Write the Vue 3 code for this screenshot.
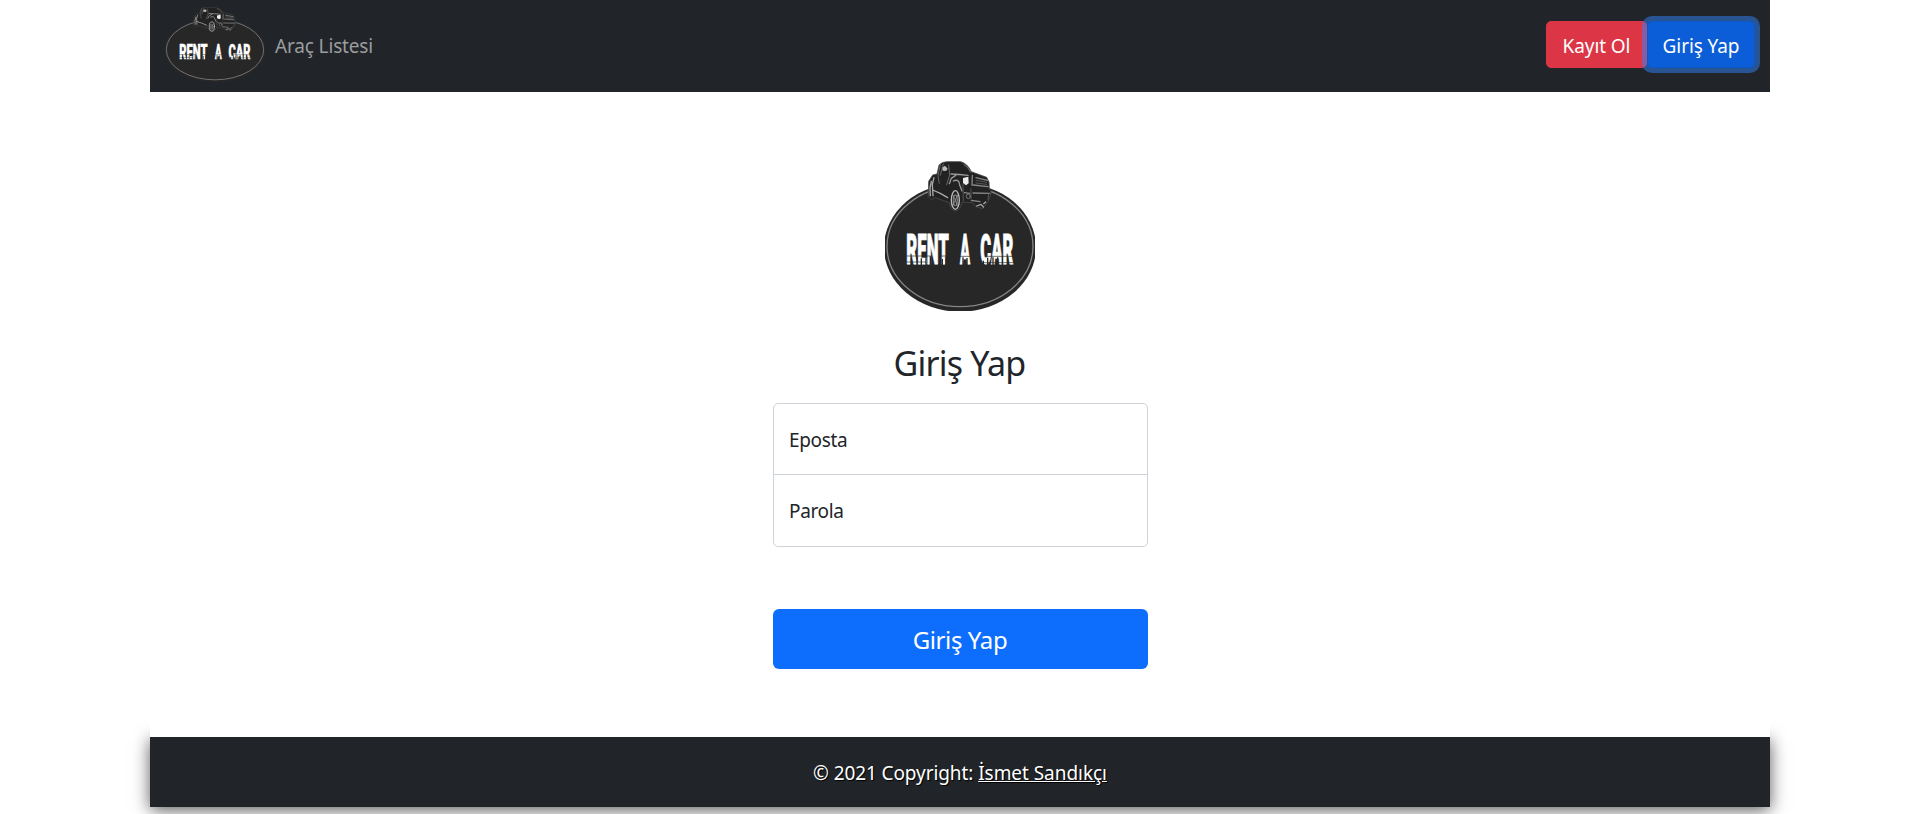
<script setup>
import { ref } from 'vue'

const fields = [
  { id: 'email', label: 'Eposta', type: 'email' },
  { id: 'password', label: 'Parola', type: 'password' },
]
const values = ref({ email: '', password: '' })

const logoWords = [
  { text: 'RENT', place: 'translate(109 342) scale(0.4 1)' },
  { text: 'A', place: 'translate(270 342) scale(0.35 1)' },
  { text: 'CAR', place: 'translate(331 342) scale(0.395 1)' },
]
</script>

<template>
  <div class="page">
    <svg class="defs" aria-hidden="true">
      <symbol id="logo-art" viewBox="45 33 450 450">
        <ellipse cx="270" cy="292" rx="228" ry="193" fill="#272727" />
        <ellipse cx="270" cy="289" rx="219" ry="181" fill="none" stroke="#858585" stroke-width="4" />
        <path d="M175 140 L176 94 L188 75 L201 72 L207 45 Q216 35 232 35 L272 35 Q292 40 304 65 L350 82 L357 96 L358 118 L363 122 L361 137 L354 154 L338 176 L318 170 L308 158 L276 156 Q272 180 256 183 Q242 180 238 158 L195 143 L184 149 Z" fill="#222" stroke="#4a4a4a" stroke-width="2.5" />
        <g fill="none" stroke-linecap="round" stroke-linejoin="round">
          <path d="M184 94 L180 114 L181 137 M192 83 L187 103 L189 137 M188 120 L211 130 L233 143" stroke="#aaa" stroke-width="4" />
          <path d="M211 43 L204 78 L208 100 M220 42 L211 76 M236 45 L239 75 L230 104" stroke="#666" stroke-width="3" />
          <path d="M243 72 Q268 73 294 76 M238 101 L244 85 L257 76 M250 93 Q267 85 269 105 L276 123" stroke="#999" stroke-width="4" />
          <path d="M281 43 L293 53 L302 67" stroke="#999" stroke-width="2" />
          <path d="M307 76 L306 106 M318 83 L352 91 M310 105 L354 110 M283 128 L299 130 M309 129 L359 130 M304 151 L330 155" stroke="#888" stroke-width="4" />
          <path d="M318 91 L350 97 M318 99 L350 103 M279 102 L280 152 M303 117 L303 147 M356 132 L354 149" stroke="#555" stroke-width="3" />
          <ellipse cx="256" cy="150" rx="12" ry="28" stroke="#bbb" stroke-width="4" />
          <ellipse cx="256" cy="151" rx="6" ry="16" stroke="#777" stroke-width="4" />
          <path d="M250 137 L262 166 M263 135 L249 166" stroke="#aaa" stroke-width="2" />
          <ellipse cx="295" cy="139" rx="6" ry="7" stroke="#777" stroke-width="3" />
          <path d="M320 168 L333 163 L340 171 M341 161 L347 156" stroke="#aaa" stroke-width="4" />
        </g>
        <path d="M217 53 L225 47 L233 56 L228 63 L218 62 Z" fill="#bbb" />
        <path d="M279 84 L295 80 L296 100 L288 106 L279 99 Z" fill="#eee" />
      </symbol>
      <symbol id="logo-drips" viewBox="45 33 450 450">
        <g fill="none" stroke="#272727">
          <path d="M108 318 h74 M211 318 h26 M268 319 h34 M350 319 h82" stroke-width="2" />
          <path d="M124 324 v24 M141 320 v28 M154 325 v23 M168 322 v26 M181 319 v29 M217 327 v21 M228 321 v27 M279 322 v26 M291 324 v24 M340 332 v16 M353 323 v25 M369 322 v26 M383 322 v26 M397 319 v29 M413 321 v27" stroke-width="4" />
          <path d="M108 336 h60 M338 338 h94" stroke-width="2" />
        </g>
      </symbol>
    </svg>

    <header class="navbar">
      <nav class="nav-left">
        <svg class="nav-logo" viewBox="45 33 450 450" preserveAspectRatio="none">
          <use href="#logo-art" x="45" y="33" width="450" height="450" />
          <text v-for="w in logoWords" :key="w.text" class="logo-word" :transform="w.place">{{ w.text }}</text>
          <use href="#logo-drips" x="45" y="33" width="450" height="450" />
        </svg>
        <a class="nav-link">Araç Listesi</a>
      </nav>
      <div class="nav-actions">
        <button class="btn danger">Kayıt Ol</button>
        <button class="btn primary focused">Giriş Yap</button>
      </div>
    </header>

    <main class="content">
      <form class="login" @submit.prevent>
        <svg class="main-logo" viewBox="45 33 450 450" preserveAspectRatio="none">
          <use href="#logo-art" x="45" y="33" width="450" height="450" />
          <text v-for="w in logoWords" :key="w.text" class="logo-word" :transform="w.place">{{ w.text }}</text>
          <use href="#logo-drips" x="45" y="33" width="450" height="450" />
        </svg>
        <h1>Giriş Yap</h1>
        <div class="fields">
          <label v-for="f in fields" :key="f.id" class="field">
            <span>{{ f.label }}</span>
            <input v-model="values[f.id]" :type="f.type" />
          </label>
        </div>
        <button class="submit" type="submit">Giriş Yap</button>
      </form>
    </main>

    <footer class="footer">
      <span class="copy">© 2021 Copyright:</span>
      <a>İsmet Sandıkçı</a>
    </footer>
  </div>
</template>

<style>
body {
  background: #fff;
  overflow: hidden;
}
</style>

<style scoped>
* {
  box-sizing: border-box;
}
.page {
  width: 1620px;
  height: 814px;
  margin-left: 150px;
  font-family: "Segoe UI", "Noto Sans", "Open Sans", sans-serif;
  font-size: 19px;
  color: #212529;
  white-space: nowrap;
}
.defs {
  display: block;
  width: 0;
  height: 0;
}
.logo-word {
  font-family: Roboto, sans-serif;
  font-weight: 900;
  font-size: 126px;
  letter-spacing: 0;
  fill: #fff;
  stroke: #fff;
  stroke-width: 3px;
}
.navbar {
  height: 92px;
  display: flex;
  justify-content: space-between;
  padding: 0 15px;
  background: #212529;
}
.nav-left {
  display: flex;
  align-items: flex-start;
  gap: 10px;
}
.nav-logo {
  width: 100px;
  height: 75px;
  margin-top: 7px;
}
.nav-link {
  line-height: 30px;
  margin-top: 31px;
  color: #9b9d9e;
  letter-spacing: -0.15px;
}
.nav-actions {
  display: flex;
  align-items: center;
}
.btn {
  height: 47px;
  margin: 0 0 4px;
  padding: 3px 0 0;
  border: 1px solid;
  border-radius: 5px;
  color: #fff;
  font: inherit;
}
.danger {
  width: 101px;
  background: #dc3545;
  border-color: #dc3545;
  letter-spacing: -0.1px;
}
.primary {
  width: 108px;
  background: #0b5ed7;
  border-color: #0a58ca;
  letter-spacing: -0.1px;
}
.focused {
  position: relative;
  box-shadow: 0 0 0 5px rgba(49, 132, 253, 0.5);
}
.content {
  position: relative;
  z-index: 1;
  height: 645px;
  padding-top: 69px;
  background: #fff;
}
.login {
  width: 375px;
  margin-left: 623px;
  display: flex;
  flex-direction: column;
}
.main-logo {
  width: 150px;
  height: 150px;
  margin-left: 112px;
}
h1 {
  margin: 31px 2px 19px 0;
  font-size: 34px;
  line-height: 42px;
  font-weight: 400;
  text-align: center;
  letter-spacing: -0.8px;
}
.fields {
  height: 144px;
  display: flex;
  flex-direction: column;
  border: 1px solid #ced4da;
  border-radius: 5px;
}
.field {
  height: 70px;
  display: flex;
  align-items: center;
  padding: 2px 15px 0;
  letter-spacing: -0.35px;
}
.field + .field {
  border-top: 1px solid #ced4da;
}
.field input {
  flex: 1;
  min-width: 0;
  height: 40px;
  border: 0;
  outline: 0;
  background: transparent;
  font: inherit;
}
.submit {
  height: 60px;
  margin-top: 62px;
  padding: 0 1px 0 0;
  border: 0;
  border-radius: 6px;
  background: #0d6efd;
  color: #fff;
  font: inherit;
  font-size: 24px;
  letter-spacing: -0.4px;
}
.footer {
  height: 70px;
  display: flex;
  align-items: center;
  justify-content: center;
  gap: 5px;
  padding-top: 2px;
  background: #212529;
  color: #fff;
  box-shadow: 0 3px 16px rgba(0, 0, 0, 0.65);
  text-shadow: 1px 1px 1px #000;
  letter-spacing: -0.05px;
}
.copy {
  letter-spacing: -0.1px;
}
.footer a {
  text-decoration: underline;
}
</style>
